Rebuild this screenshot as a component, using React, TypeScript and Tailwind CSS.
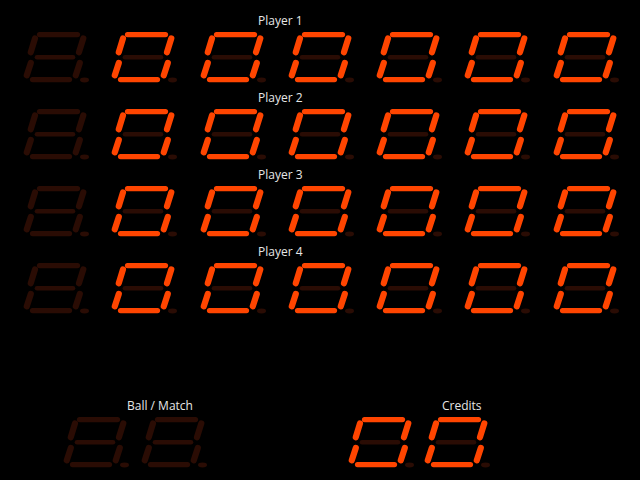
import React from 'react';

const ON = '#ff4500';
const OFF = '#2a0c04';

// segment order: a b c d e f g
const DIGITS: Record<string, boolean[]> = {
  '0': [true, true, true, true, true, true, false],
  blank: [false, false, false, false, false, false, false],
};

const SevenSeg: React.FC<{ value: string }> = ({ value }) => {
  const s = DIGITS[value] || DIGITS.blank;
  const c = (i: number) => (s[i] ? ON : OFF);
  return (
    <svg width="70" height="52" viewBox="0 0 70 52" className="block shrink-0">
      <g strokeLinecap="round" fill="none">
        {/* a */}
        <line x1="19.5" y1="2.6" x2="57.5" y2="2.6" stroke={c(0)} strokeWidth="5.2" />
        {/* b */}
        <line x1="63.3" y1="6.4" x2="59" y2="20.2" stroke={c(1)} strokeWidth="6.2" />
        {/* c */}
        <line x1="59.8" y1="31" x2="55.8" y2="43.2" stroke={c(2)} strokeWidth="6.2" />
        {/* d */}
        <line x1="12.5" y1="47.6" x2="49.5" y2="47.6" stroke={c(3)} strokeWidth="5.2" />
        {/* e */}
        <line x1="10.8" y1="31" x2="6.8" y2="43.2" stroke={c(4)} strokeWidth="6.2" />
        {/* f */}
        <line x1="15" y1="6.4" x2="10.8" y2="20.2" stroke={c(5)} strokeWidth="6.2" />
        {/* g */}
        <line x1="17" y1="25.2" x2="53" y2="25.2" stroke={c(6)} strokeWidth="4.6" />
      </g>
      {/* decimal point */}
      <ellipse cx="64.5" cy="48" rx="4.5" ry="2.4" fill={OFF} />
    </svg>
  );
};

const PlayerRow: React.FC<{ label: string }> = ({ label }) => (
  <div className="h-[77px] flex flex-col">
    <div className="pl-[258px] pt-[2px] h-[18px] leading-4 text-[12px] text-[#e6e6e6]">{label}</div>
    <div className="mt-[3px] flex gap-[18.3px] pl-[20px]">
      <SevenSeg value="blank" />
      {[0, 1, 2, 3, 4, 5].map((i) => (
        <SevenSeg key={i} value="0" />
      ))}
    </div>
  </div>
);

export default function App() {
  return (
    <div
      className="w-[640px] h-[480px] bg-black overflow-hidden pt-[11px]"
      style={{ fontFamily: '"Open Sans", "DejaVu Sans", sans-serif' }}
    >
      <PlayerRow label="Player 1" />
      <PlayerRow label="Player 2" />
      <PlayerRow label="Player 3" />
      <PlayerRow label="Player 4" />

      <div className="mt-[79px] flex pl-[60px] gap-[137px]">
        <div className="flex flex-col">
          <div className="pl-[67px] h-4 leading-4 text-[12px] text-[#e6e6e6]">Ball / Match</div>
          <div className="mt-[3px] flex gap-[8px]">
            <SevenSeg value="blank" />
            <SevenSeg value="blank" />
          </div>
        </div>
        <div className="flex flex-col">
          <div className="pl-[97px] h-4 leading-4 text-[12px] text-[#e6e6e6]">Credits</div>
          <div className="mt-[3px] flex gap-[6px]">
            <SevenSeg value="0" />
            <SevenSeg value="0" />
          </div>
        </div>
      </div>
    </div>
  );
}
